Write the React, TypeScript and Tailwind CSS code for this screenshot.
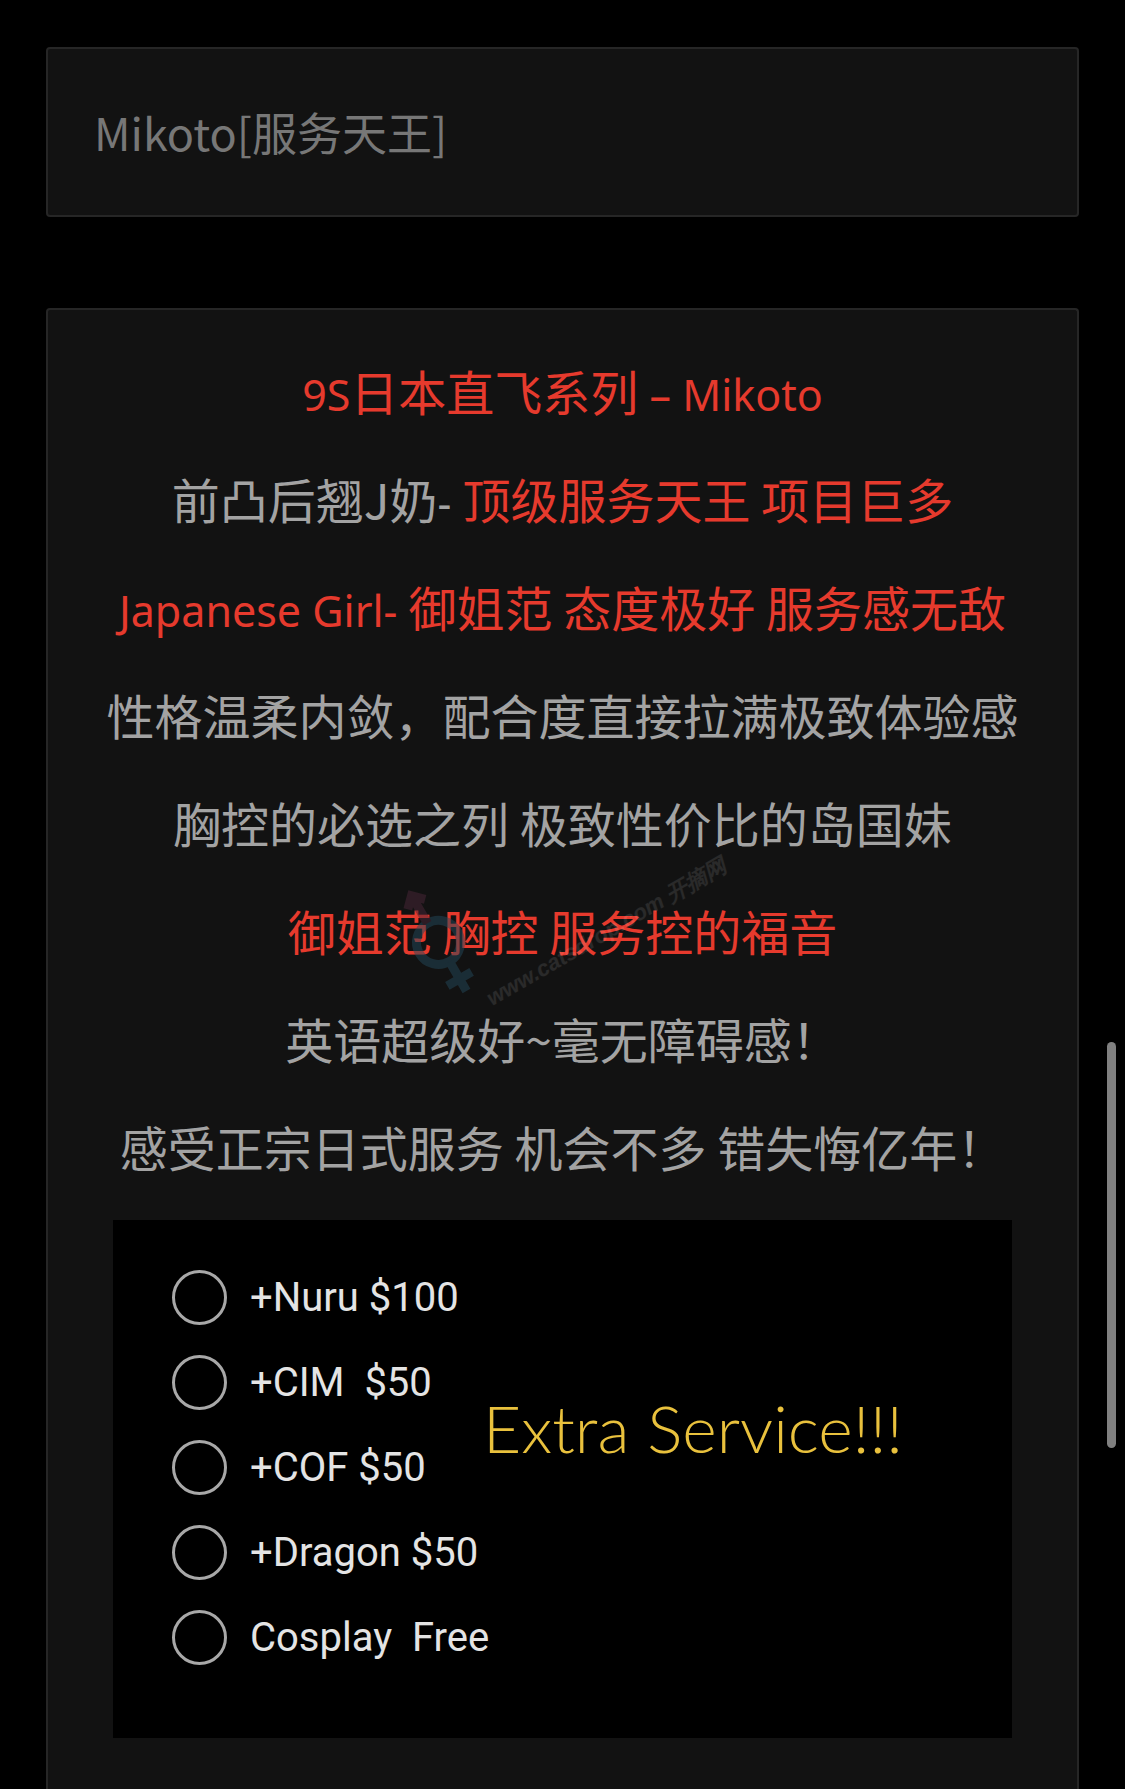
import React from "react";

const cjk = "font-['Noto_Sans_CJK_SC','Noto_Sans',sans-serif]";

type Part = { text: string; red?: boolean; latin?: boolean };

const lines: Part[][] = [
  [
    { text: "9S", red: true, latin: true },
    { text: "日本直飞系列", red: true },
    { text: " – Mikoto", red: true, latin: true },
  ],
  [
    { text: "前凸后翘J奶" },
    { text: "- ", latin: true },
    { text: "顶级服务天王 项目巨多", red: true },
  ],
  [
    { text: "Japanese Girl- ", red: true, latin: true },
    { text: "御姐范 态度极好 服务感无敌", red: true },
  ],
  [{ text: "性格温柔内敛，配合度直接拉满极致体验感" }],
  [{ text: "胸控的必选之列 极致性价比的岛国妹" }],
  [{ text: "御姐范 胸控 服务控的福音", red: true }],
  [{ text: "英语超级好~毫无障碍感！" }],
  [{ text: "感受正宗日式服务 机会不多 错失悔亿年！" }],
];

const extras = ["+Nuru $100", "+CIM  $50", "+COF $50", "+Dragon $50", "Cosplay  Free"];

const Radio = ({ label }: { label: string }) => (
  <div className="flex items-center h-[85px]">
    <span className="w-[55px] h-[55px] rounded-full border-[3px] border-[#a8a8a8] shrink-0" />
    <span className="ml-[23px] text-[40px] text-[#e4e4e4] whitespace-pre font-['Roboto',sans-serif]">
      {label}
    </span>
  </div>
);

const App = () => {
  return (
    <div className={`relative h-[1789px] overflow-hidden bg-black ${cjk}`}>
      <div className="px-[46px] pt-[47px]">
        <div className="h-[170px] rounded-[4px] border-2 border-[#262626] bg-[#121212] flex items-center pl-[46px]">
          <span className="text-[45px] text-[#777777]">Mikoto[服务天王]</span>
        </div>

        <div className="mt-[91px] rounded-t-[4px] border-2 border-b-0 border-[#262626] bg-[#121212] pt-[26px] pb-[60px]">
          {lines.map((parts, i) => (
            <p key={i} className="h-[108px] text-center text-[48px] leading-[108px] text-[#a3a3a3] whitespace-pre">
              {parts.map((p, j) => (
                <span
                  key={j}
                  className={`${p.red ? "text-[#e63a2d]" : ""} ${p.latin ? "text-[43px] leading-none font-['Noto_Sans',sans-serif]" : ""}`}
                >
                  {p.text}
                </span>
              ))}
            </p>
          ))}

          <div className="relative mx-[65px] mt-[20px] h-[518px] bg-black pl-[59px] pt-[35px]">
            {extras.map((e) => (
              <Radio key={e} label={e} />
            ))}
            <div className="absolute left-[370px] top-[158px] text-[66px] text-[#e9c13d] font-['Lato',sans-serif] font-light">
              Extra Service!!!
            </div>
          </div>
        </div>
      </div>

      {/* watermark */}
      <svg
        className="pointer-events-none absolute left-[395px] top-[880px] opacity-50"
        width="90"
        height="130"
        viewBox="0 0 90 130"
      >
        <g transform="rotate(-30 45 65)" fill="none" strokeWidth="9">
          <circle cx="45" cy="62" r="22" stroke="#23485a" />
          <path d="M45 84 V118 M31 104 H59" stroke="#23485a" />
          <path d="M45 40 V8 M35 18 L45 8 L55 18" stroke="#4a2638" />
        </g>
      </svg>
      <div className="pointer-events-none absolute left-[470px] top-[915px] text-[22px] italic font-bold text-white/10 -rotate-[30deg] whitespace-nowrap font-['Liberation_Sans',sans-serif]">
        www.catsdrop.com 开摘网
      </div>

      {/* scrollbar */}
      <div className="absolute left-[1107px] top-[1042px] h-[406px] w-[9px] rounded-full bg-[#808080]" />
    </div>
  );
};

export default App;
